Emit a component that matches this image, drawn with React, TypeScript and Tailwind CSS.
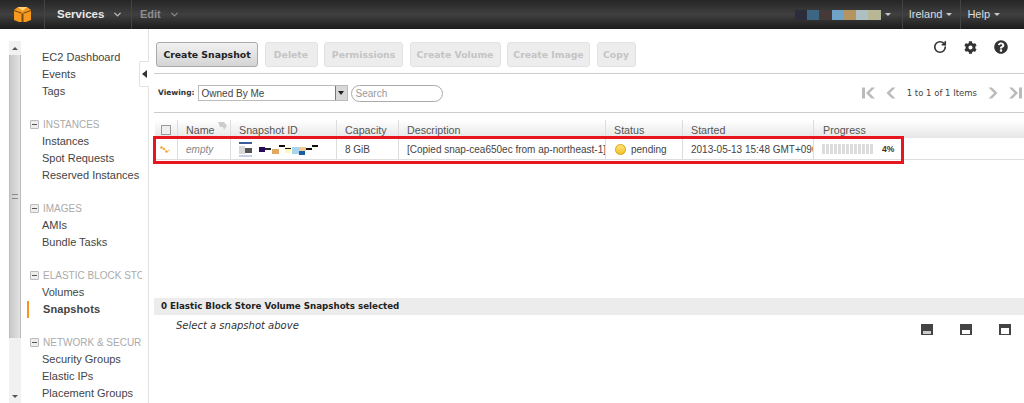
import { FaCog, FaQuestionCircle } from 'react-icons/fa';
import { ChevronDown, RotateCw } from 'lucide-react';

const arial = "font-['Liberation_Sans',Arial,sans-serif]";
const verdana = "font-['DejaVu_Sans',Verdana,sans-serif]";

const sections = [
  { items: ['EC2 Dashboard', 'Events', 'Tags'] },
  { title: 'INSTANCES', items: ['Instances', 'Spot Requests', 'Reserved Instances'] },
  { title: 'IMAGES', items: ['AMIs', 'Bundle Tasks'] },
  { title: 'ELASTIC BLOCK STORE', items: ['Volumes', 'Snapshots'] },
  { title: 'NETWORK & SECURITY', items: ['Security Groups', 'Elastic IPs', 'Placement Groups'] },
];

const swatches = ['#2b2d3a', '#3d6684', '#453a38', '#6fa3c7', '#b4955f', '#adbfc0', '#b7b796'];
const buttons = [
  { label: 'Delete', w: 'w-[53px]' },
  { label: 'Permissions', w: 'w-[79px]' },
  { label: 'Create Volume', w: 'w-[91px]' },
  { label: 'Create Image', w: 'w-[83px]' },
  { label: 'Copy', w: 'w-[39px]' },
];

function Caret() {
  return <span className="ml-[4px] inline-block h-0 w-0 border-x-[3px] border-t-[3px] border-x-transparent border-t-[#c8c8c8]" />;
}

function Header() {
  return (
    <header className={`flex h-[29px] items-center bg-gradient-to-b from-[#262626] via-[#404040] to-[#1c1c1c] text-white ${arial}`}>
      <div className="flex h-full w-[44px] items-center pl-[14px]">
        <svg width="17" height="17" viewBox="0 0 17 17">
          <path d="M0 4 L4 1 L13 1 L17 4 L17 14 L12 16 L5 16 L0 14Z" fill="#f59a1e" />
          <path d="M4 1 L13 1 L8.5 5Z" fill="#ffd27a" />
          <path d="M0 4 L7.5 6.5 L7.5 16 L9.5 16 L9.5 6.5 L17 4 L17 5 L10 7.500 L7 7.500 L0 5Z" fill="#7a4a10" />
        </svg>
      </div>
      <div className="flex h-full w-[87px] items-center border-l border-[#444] pl-[12px] text-[11.5px] font-bold text-[#e8e8e8]">
        Services
        <ChevronDown size={11} strokeWidth={3} className="ml-[8px] text-[#bbb]" />
      </div>
      <div className="flex h-full items-center border-l border-[#444] pl-[8px] text-[11px] font-bold text-[#8d8d8d]">
        Edit
        <ChevronDown size={11} strokeWidth={3} className="ml-[8px] text-[#888]" />
      </div>
      <div className="ml-auto flex h-full items-center">
        <div className="flex h-[10px]">
          {swatches.map((c) => (
            <span key={c} className="w-[12.3px]" style={{ backgroundColor: c }} />
          ))}
        </div>
        <Caret />
        <div className="ml-[11px] flex h-full items-center border-l border-[#444] pl-[6px] text-[11px] text-[#ddd]">
          Ireland
          <Caret />
        </div>
        <div className="ml-[8px] mr-[24px] flex h-full items-center border-l border-[#444] pl-[6px] text-[11px] text-[#ddd]">
          Help
          <Caret />
        </div>
      </div>
    </header>
  );
}

function Sidebar() {
  return (
    <aside className={`relative flex w-[149px] shrink-0 border-r border-[#e2e2e2] pl-[9px] pt-[12px] ${arial}`}>
      <div className="flex h-[362px] w-[12px] shrink-0 flex-col bg-[#f1f1f1]">
        <div className="flex h-[14px] items-center justify-center">
          <span className="h-0 w-0 border-x-[3px] border-b-[3px] border-x-transparent border-b-[#555]" />
        </div>
        <div className="flex h-[283px] items-center justify-center border-x border-[#bbb] bg-gradient-to-r from-[#c9c9c9] to-[#e2e2e2]">
          <span className="h-[5px] w-[6px] border-y border-[#888]" />
        </div>
        <div className="mt-auto flex h-[13px] items-center justify-center">
          <span className="h-0 w-0 border-x-[3px] border-t-[3px] border-x-transparent border-t-[#555]" />
        </div>
      </div>
      <nav className="w-[121px] shrink-0 overflow-hidden pl-[9px] pt-[8px] text-[11px] leading-[17px] text-[#444]">
        {sections.map((s, i) => (
          <div key={i} className={s.title ? 'mt-[16px]' : ''}>
            {s.title && (
              <div className="flex items-center whitespace-nowrap text-[10px] text-[#aaa]">
                <span className="mr-[4px] flex h-[9px] w-[9px] shrink-0 items-center justify-center rounded-[1px] border border-[#bbb] bg-[#eee]">
                  <span className="h-px w-[5px] bg-[#555]" />
                </span>
                {s.title}
              </div>
            )}
            {s.items.map((it) =>
              it === 'Snapshots' ? (
                <div key={it} className="-ml-[3px] border-l-[2px] border-[#f7931e] pl-[14px] font-bold tracking-[0.1px] text-[#444]">
                  {it}
                </div>
              ) : (
                <div key={it} className="pl-[12px] whitespace-nowrap">{it}</div>
              ),
            )}
          </div>
        ))}
      </nav>
      <div className="absolute right-[-1px] top-[32px] flex h-[26px] w-[10px] items-center justify-center rounded-l-[2px] border-y border-l border-[#e2e2e2] bg-white">
        <span className="h-0 w-0 border-y-[4px] border-r-[5px] border-y-transparent border-r-[#333]" />
      </div>
    </aside>
  );
}

function Toolbar() {
  return (
    <div className="flex h-[32px] items-start justify-between border-b border-[#ccc] pl-[2px]">
      <div className={`flex gap-[6.5px] text-[9.3px] font-bold ${verdana}`}>
        <button className="flex h-[25px] w-[102px] items-center justify-center rounded-[3px] border border-[#aaa] bg-gradient-to-b from-[#f2f2f2] to-[#d4d4d4] text-[#222]">
          Create Snapshot
        </button>
        {buttons.map((b) => (
          <button key={b.label} className={`flex h-[25px] items-center justify-center whitespace-nowrap rounded-[3px] border border-[#e2e2e2] bg-[#ededed] text-[#c4c4c4] ${b.w}`}>
            {b.label}
          </button>
        ))}
      </div>
      <div className="-mt-[2px] flex items-center gap-[17px] pr-[16px] text-[#333]">
        <RotateCw size={14} strokeWidth={2.8} />
        <FaCog size={13} />
        <FaQuestionCircle size={14} />
      </div>
    </div>
  );
}

function Pager() {
  return (
    <div className={`flex items-center text-[8.5px] text-[#444] ${verdana}`}>
      <svg width="13" height="12" viewBox="0 0 13 12" fill="#bbb">
        <path d="M0 0.500h3v11H0z" />
        <path d="M9.500 0.500L4 6l5.500 5.500H13L7.500 6 13 0.500z" />
      </svg>
      <svg width="10" height="12" viewBox="0 0 10 12" fill="#bbb" className="ml-[11px]">
        <path d="M6 0.500L0.500 6 6 11.500h3.500L4 6l5.500-5.500z" />
      </svg>
      <span className="mx-[11px] whitespace-nowrap">1 to 1 of 1 Items</span>
      <svg width="10" height="12" viewBox="0 0 10 12" fill="#bbb">
        <path d="M4 0.500L9.500 6 4 11.500H0.500L6 6 0.500 0.500z" />
      </svg>
      <svg width="13" height="12" viewBox="0 0 13 12" fill="#bbb" className="ml-[11px]">
        <path d="M10 0.500h3v11h-3z" />
        <path d="M3.500 0.500L9 6l-5.500 5.500H0L5.500 6 0 0.500z" />
      </svg>
    </div>
  );
}

function FilterRow() {
  return (
    <div className="flex h-[39px] items-center justify-between border-b border-[#ccc] pl-[4px] pr-[2px]">
      <div className="flex items-center">
        <span className={`mr-[3px] text-[7.5px] font-bold text-[#333] ${verdana}`}>Viewing:</span>
        <div className={`flex h-[16px] w-[150px] items-center justify-between border border-[#bbb] bg-white pl-[3px] text-[10px] text-[#444] ${arial}`}>
          Owned By Me
          <span className="flex h-[14px] w-[12px] items-center justify-center border-l border-[#777] bg-[#d8d8d8]">
            <span className="h-0 w-0 border-x-[3px] border-t-[4px] border-x-transparent border-t-[#222]" />
          </span>
        </div>
        <div className={`ml-[3px] flex h-[17px] w-[92px] items-center rounded-[9px] border border-[#aaa] pl-[4px] text-[10px] text-[#999] ${arial}`}>
          Search
        </div>
      </div>
      <Pager />
    </div>
  );
}

const cols = [
  { w: 'w-[23px]', label: '' },
  { w: 'w-[53px]', label: 'Name' },
  { w: 'w-[106px]', label: 'Snapshot ID' },
  { w: 'w-[62px]', label: 'Capacity' },
  { w: 'w-[207px]', label: 'Description' },
  { w: 'w-[77px]', label: 'Status' },
  { w: 'w-[131px]', label: 'Started' },
];

function Table() {
  const cell = 'flex h-full shrink-0 items-center overflow-hidden whitespace-nowrap border-r border-[#ddd] pl-[8px]';
  return (
    <div className={`relative ml-[1px] mt-[7px] text-[10.7px] ${arial}`}>
      <div className="flex h-[18px] items-center bg-gradient-to-b from-white to-[#e6e6e6] text-[#555]">
        {cols.map((c, i) => (
          <div key={i} className={`${cell} ${c.w} pt-[3px] ${i === 0 ? 'justify-center !pl-0 !pt-0' : ''} ${i === 1 ? 'relative' : ''}`}>
            {i === 0 && <span className="mt-[2px] h-[10px] w-[10px] border border-[#999] bg-[#eee]" />}
            {c.label}
            {i === 1 && (
              <svg width="10" height="8" viewBox="0 0 10 8" className="absolute right-[2px] top-[2px]">
                <path d="M0 0h6l3 4-3 4-1-3H2z" fill="#ccc" />
              </svg>
            )}
          </div>
        ))}
        <div className="pl-[9px] pt-[3px]">Progress</div>
      </div>
      <div className="flex h-[22px] items-center border-b border-[#ddd] text-[10px] text-[#444]">
        <div className={`${cols[0].w} ${cell} justify-center !pl-0`}>
          <svg width="12" height="8" viewBox="0 0 12 8" className="mt-[3px]">
            <circle cx="1.500" cy="1.500" r="1.300" fill="#f0a030" />
            <circle cx="4" cy="3" r="1.300" fill="#f5b040" />
            <circle cx="6.500" cy="5.500" r="1.300" fill="#f0a030" />
            <circle cx="9" cy="4.500" r="1" fill="#f8c878" />
          </svg>
        </div>
        <div className={`${cols[1].w} ${cell} pt-[1px] italic text-[#888]`}>empty</div>
        <div className={`${cols[2].w} ${cell} pl-[7px] pt-[2px]`}>
          <svg width="82" height="16" viewBox="0 0 82 16" className="shrink-0">
            <path d="M0 0h13v2H0z" fill="#3a5d9c" />
            <path d="M0 4h6v8H0z" fill="#d8d8d8" />
            <path d="M6 6h7v5H6z" fill="#555" />
            <path d="M0 13h13v2H0z" fill="#c8d0e8" />
            <path d="M20 5h6v5h-6z" fill="#2a0a5c" />
            <path d="M26 6h6v2h-6z" fill="#222" />
            <path d="M33 7h7v5h-7z" fill="#e0a860" />
            <path d="M40 3h6v2h-6z" fill="#111" />
            <path d="M46 5h6v6h-6z" fill="#fdf7c0" />
            <path d="M46 6h6v1h-6z" fill="#111" />
            <path d="M53 5h7v7h-7z" fill="#a8d4ee" />
            <path d="M60 5h7v4h-7z" fill="#f0c890" />
            <path d="M60 9h6v4h-6z" fill="#1a5ea8" />
            <path d="M67 6h6v2h-6z" fill="#111" />
            <path d="M73 3h6v2h-6z" fill="#111" />
          </svg>
        </div>
        <div className={`${cols[3].w} ${cell} pt-[1px]`}>8 GiB</div>
        <div className={`${cols[4].w} ${cell} pt-[1px]`}>[Copied snap-cea650ec from ap-northeast-1]</div>
        <div className={`${cols[5].w} ${cell} pl-[9px] pt-[1px]`}>
          <span className="mr-[5px] h-[11px] w-[11px] rounded-full border border-[#d9a400] bg-gradient-to-b from-[#ffe37a] to-[#f5c21b]" />
          pending
        </div>
        <div className={`${cols[6].w} ${cell} pt-[1px]`}>2013-05-13 15:48 GMT+0900</div>
        <div className="flex h-full items-center pl-[8px] pt-[1px]">
          <div className="flex gap-px">
            {Array.from({ length: 13 }).map((_, i) => (
              <span key={i} className="h-[10px] w-[3px] bg-[#dcdcdc]" />
            ))}
          </div>
          <span className="ml-[9px] text-[8.5px] font-bold text-[#333]">4%</span>
        </div>
      </div>
      <div className="absolute left-[-2px] top-[16px] h-[28px] w-[751px] border-[3px] border-[#e8141f]" />
    </div>
  );
}

function Footer() {
  const icons = [
    { h: 'h-[3px]', c: 'bg-[#ccc]' },
    { h: 'h-[4px]', c: 'bg-white' },
    { h: 'h-[6px]', c: 'bg-white' },
  ];
  return (
    <div className="mt-[138px]">
      <div className={`flex h-[17px] items-center bg-[#ececec] pl-[7px] pt-[1px] text-[8.7px] font-bold text-[#222] ${verdana}`}>
        0 Elastic Block Store Volume Snapshots selected
      </div>
      <div className="flex justify-between pt-[3px]">
        <div className={`pl-[22px] text-[10px] italic text-[#333] ${verdana}`}>Select a snapshot above</div>
        <div className="flex gap-[27px] pr-[13px] pt-[6px]">
          {icons.map((ic, i) => (
            <span key={i} className="flex h-[11px] w-[12px] items-end justify-center bg-[#444] pb-[1px]">
              <span className={`w-[8px] ${ic.h} ${ic.c}`} />
            </span>
          ))}
        </div>
      </div>
    </div>
  );
}

export default function App() {
  return (
    <div className="flex h-[403px] w-[1024px] flex-col overflow-hidden bg-white">
      <Header />
      <div className="flex min-h-0 flex-1">
        <Sidebar />
        <main className="min-w-0 flex-1 pl-[5px] pt-[13px]">
          <Toolbar />
          <FilterRow />
          <Table />
          <Footer />
        </main>
      </div>
    </div>
  );
}
